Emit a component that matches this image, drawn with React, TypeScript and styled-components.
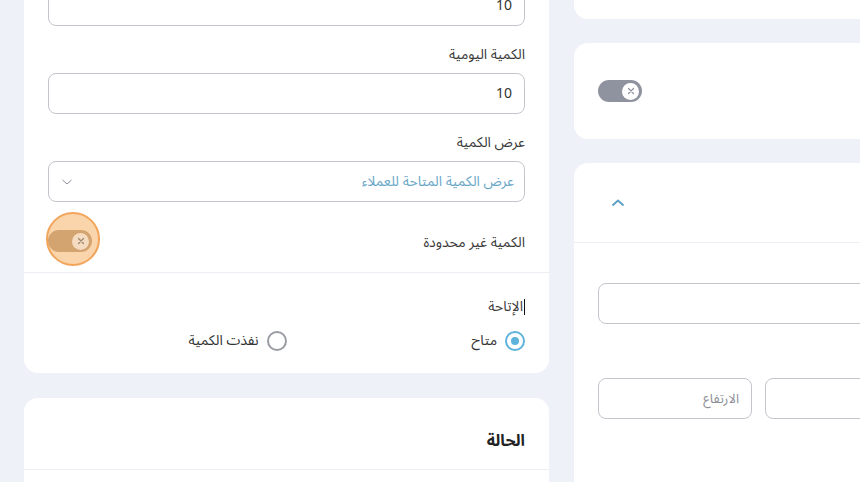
import styled, { createGlobalStyle } from "styled-components";

const GlobalStyle = createGlobalStyle`
  html, body {
    margin: 0;
    padding: 0;
    background: #eef1f8;
    overflow: hidden;
  }
  body {
    font-family: "Noto Sans Arabic", "DejaVu Sans", "Noto Sans", sans-serif;
    color: #333;
  }
  * { box-sizing: border-box; }
`;

const Page = styled.div`
  display: flex;
  align-items: flex-start;
  gap: 25px;
  padding-left: 24px;
  width: 1200px;
`;

const Column = styled.div<{ $width: number; $gap: number; $offset: number }>`
  width: ${(p) => p.$width}px;
  flex-shrink: 0;
  display: flex;
  flex-direction: column;
  gap: ${(p) => p.$gap}px;
  margin-top: ${(p) => p.$offset}px;
`;

const Card = styled.div<{ $height?: number }>`
  direction: rtl;
  flex-shrink: 0;
  background: #fff;
  border-radius: 14px;
  ${(p) => (p.$height ? `height: ${p.$height}px;` : "")}
`;

const Section = styled.div<{ $divider?: boolean }>`
  padding: 24px 24px 0;
  ${(p) => (p.$divider ? "border-bottom: 1px solid #eceef3;" : "")}
`;

const Field = styled.div`
  display: flex;
  flex-direction: column;
  gap: 8px;
  margin-bottom: 19px;
`;

const Label = styled.label<{ $shift?: number }>`
  font-size: 14px;
  line-height: 20px;
  color: #3a3a3a;
  display: flex;
  align-items: center;
  margin-top: ${(p) => p.$shift ?? 0}px;
`;

const Input = styled.div<{ $placeholder?: boolean }>`
  height: 41px;
  border: 1px solid #c3c5cb;
  border-radius: 8px;
  display: flex;
  align-items: center;
  justify-content: space-between;
  padding: 0 12px 0 18px;
  font-size: ${(p) => (p.$placeholder ? 13 : 14)}px;
  color: ${(p) => (p.$placeholder ? "#8b8e96" : "#333")};
  background: #fff;
`;

const Select = styled(Input)`
  color: #6aa7c7;
  font-size: 14px;
  padding: 0 10px 0 12px;
`;

const ToggleRow = styled.div`
  display: flex;
  align-items: center;
  justify-content: space-between;
  height: 52px;
  margin-top: -6px;
  margin-bottom: 5px;
`;

const Switch = styled.div<{ $focus?: boolean }>`
  position: relative;
  width: 44px;
  height: 22px;
  border-radius: 11px;
  background: ${(p) => (p.$focus ? "#a8917a" : "#8e939f")};
  display: flex;
  align-items: center;
  justify-content: flex-end;
  padding-right: 3px;
  direction: ltr;
  ${(p) =>
    p.$focus
      ? `&::before {
    content: "";
    position: absolute;
    left: -2px;
    top: -18px;
    width: 54px;
    height: 54px;
    border-radius: 50%;
    background: rgba(246, 178, 104, 0.55);
    border: 2px solid #f2a55a;
    box-sizing: border-box;
  }`
      : ""}
`;

const Knob = styled.span<{ $focus?: boolean }>`
  position: relative;
  width: 17px;
  height: 17px;
  border-radius: 50%;
  background: ${(p) => (p.$focus ? "#f5dcc1" : "#fff")};
  display: flex;
  align-items: center;
  justify-content: center;
`;

const Caret = styled.span`
  display: inline-block;
  width: 1px;
  height: 16px;
  background: #111;
  margin-left: 1px;
`;

const RadioGroup = styled.div`
  display: grid;
  grid-template-columns: 1fr 1fr;
  padding: 9px 0 18px;
`;

const RadioOption = styled.div`
  display: flex;
  align-items: center;
  gap: 8px;
  font-size: 14px;
  color: #333;
`;

const Radio = styled.span<{ $checked?: boolean }>`
  width: 20px;
  height: 20px;
  border-radius: 50%;
  border: 2px solid ${(p) => (p.$checked ? "#5eb3dc" : "#9a9ca3")};
  display: flex;
  align-items: center;
  justify-content: center;
  &::after {
    content: "";
    width: 8px;
    height: 8px;
    border-radius: 50%;
    background: ${(p) => (p.$checked ? "#5eb3dc" : "transparent")};
  }
`;

const CardHeader = styled.div<{ $height: number }>`
  height: ${(p) => p.$height}px;
  border-bottom: 1px solid #eceef3;
  display: flex;
  align-items: center;
  justify-content: space-between;
  padding: 0 24px;
`;

const Title = styled.h3`
  margin: 0;
  padding-top: 14px;
  font-size: 16px;
  font-weight: 700;
  color: #222;
`;

const CenterRow = styled.div`
  height: 100%;
  display: flex;
  align-items: center;
  justify-content: space-between;
  padding: 0 24px;
`;

const ChevronButton = styled.span`
  width: 40px;
  height: 40px;
  display: flex;
  align-items: center;
  justify-content: center;
`;

const Body = styled.div`
  padding: 40px 24px;
`;

const InputsRow = styled.div`
  display: grid;
  grid-template-columns: repeat(3, 1fr);
  gap: 13px;
  margin-top: 54px;
`;

const XIcon = ({ color }: { color: string }) => (
  <svg width="8" height="8" viewBox="0 0 8 8">
    <path d="M1.5 1.5 L6.5 6.5 M6.5 1.5 L1.5 6.5" stroke={color} strokeWidth="1.2" strokeLinecap="round" />
  </svg>
);

export default function App() {
  return (
    <>
      <GlobalStyle />
      <Page>
        <Column $width={525} $gap={25} $offset={-67}>
          <Card>
            <Section $divider>
              <Field>
                <Label>الكمية</Label>
                <Input>10</Input>
              </Field>
              <Field>
                <Label>الكمية اليومية</Label>
                <Input>10</Input>
              </Field>
              <Field>
                <Label>عرض الكمية</Label>
                <Select>
                  <span>عرض الكمية المتاحة للعملاء</span>
                  <svg width="12" height="8" viewBox="0 0 12 8">
                    <path d="M1.5 2 L6 6 L10.5 2" fill="none" stroke="#8b8e96" strokeWidth="1" />
                  </svg>
                </Select>
              </Field>
              <ToggleRow>
                <Label $shift={4}>الكمية غير محدودة</Label>
                <Switch $focus>
                  <Knob $focus>
                    <XIcon color="#9c8670" />
                  </Knob>
                </Switch>
              </ToggleRow>
            </Section>
            <Section>
              <Label>
                <Caret />
                الإتاحة
              </Label>
              <RadioGroup>
                <RadioOption>
                  <Radio $checked />
                  متاح
                </RadioOption>
                <RadioOption>
                  <Radio />
                  نفذت الكمية
                </RadioOption>
              </RadioGroup>
            </Section>
          </Card>
          <Card $height={200}>
            <CardHeader $height={72}>
              <Title>الحالة</Title>
            </CardHeader>
          </Card>
        </Column>
        <Column $width={536} $gap={24} $offset={-69}>
          <Card $height={88} />
          <Card $height={96}>
            <CenterRow>
              <span />
              <Switch>
                <Knob>
                  <XIcon color="#8e939f" />
                </Knob>
              </Switch>
            </CenterRow>
          </Card>
          <Card $height={400}>
            <CardHeader $height={80}>
              <span />
              <ChevronButton>
                <svg width="14" height="9" viewBox="0 0 14 9">
                  <path d="M2 7 L7 2.5 L12 7" fill="none" stroke="#5a9fc3" strokeWidth="1.8" strokeLinecap="round" />
                </svg>
              </ChevronButton>
            </CardHeader>
            <Body>
              <Input />
              <InputsRow>
                <Input />
                <Input />
                <Input $placeholder>الارتفاع</Input>
              </InputsRow>
            </Body>
          </Card>
        </Column>
      </Page>
    </>
  );
}
